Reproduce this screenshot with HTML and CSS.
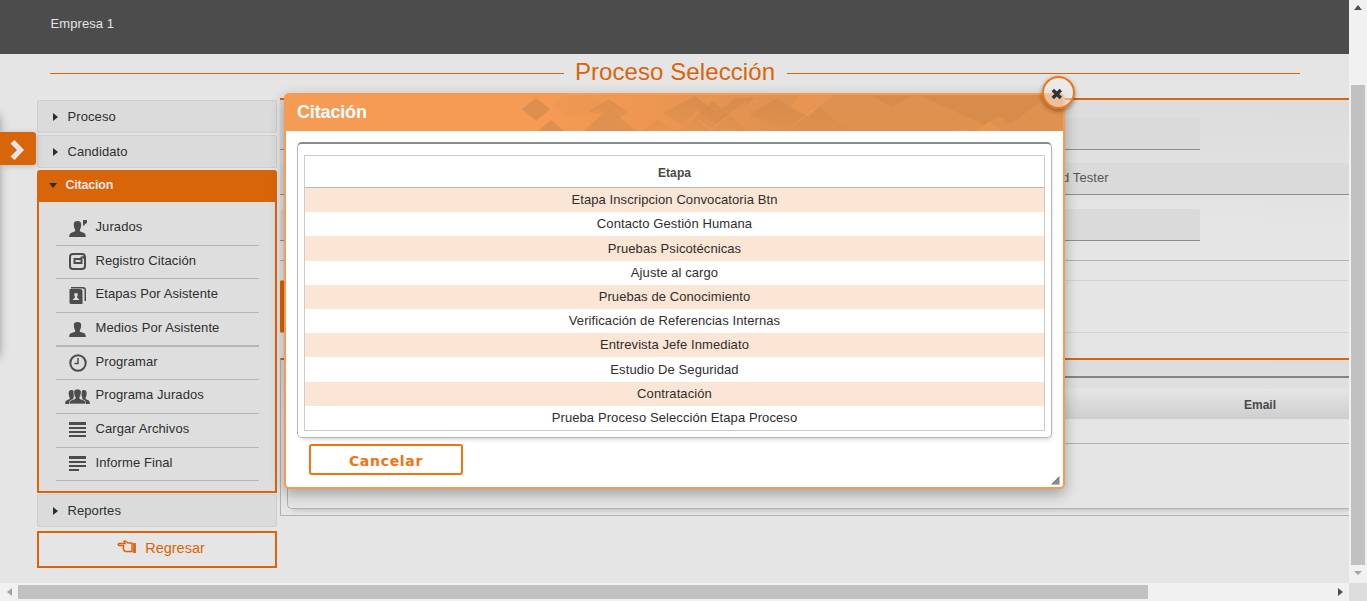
FILE: index.html
```html
<!DOCTYPE html>
<html lang="es">
<head>
<meta charset="utf-8">
<title>Proceso Selección</title>
<link rel="stylesheet" href="styles.css">
</head>
<body>
<svg class="defs" width="0" height="0">
  <symbol id="person" viewBox="0 0 18 16" preserveAspectRatio="none"><path d="M9 0C6 0 4.900 1.600 5.100 4c.1 2 .6 3.600 1.400 4.500v1.800L2 12C.7 12.700.2 14 .2 16h17.600c0-2-.5-3.300-1.800-4l-4.500-1.700V8.500c.8-.9 1.300-2.500 1.400-4.500C13.100 1.600 12 0 9 0z"/></symbol>
</svg>
<div class="window">
  <div class="page">
    <header class="topbar">Empresa 1</header>
    <div class="title-row"><i></i><h1>Proceso Selección</h1><i></i></div>
    <div class="columns">
      <nav class="sidebar">
        <div class="section first"><b class="arrow"></b><span>Proceso</span></div>
        <div class="section second"><b class="arrow"></b><span>Candidato</span></div>
        <div class="section open"><b class="arrow down"></b><span>Citacion</span></div>
        <ul class="menu">
          <li><svg width="26" height="20"><use href="#person" x="4" y="4" width="17" height="16"/><path d="M18 3h4v3l-2 1-1 2-1-1z"/></svg><span>Jurados</span></li>
          <li><svg width="26" height="20" class="line"><rect x="5" y="3" width="15" height="15" rx="3"/><path d="M9.500 8h7v4h-7z"/><path class="thin" d="M14 9l3-3h2v2"/></svg><span>Registro Citación</span></li>
          <li><svg width="26" height="20"><path d="M6 3h12q3 0 3 3v11h-1.500V6q0-1.500-2-1.500H6zM5 5h10q2.500 0 2.500 2v13H6q-1.500 0-1.500-1.500V5z"/><path class="light" d="M11 9q-2.300 0-1.700 2.200l.6 1.300v1L7.500 16h7l-2.400-2.500v-1l.6-1.300Q13.300 9 11 9z"/></svg><span>Etapas Por Asistente</span></li>
          <li class="thick"><svg width="26" height="20"><use href="#person" x="4" y="4" width="17" height="15"/></svg><span>Medios Por Asistente</span></li>
          <li><svg width="26" height="20" class="line"><circle cx="13" cy="11" r="7.700"/><path class="thin" d="M13 6v5.500H9.500"/></svg><span>Programar</span></li>
          <li><svg width="26" height="20"><use href="#person" x="0" y="5" width="13" height="14"/><use href="#person" x="13" y="5" width="12" height="14"/><use class="front" href="#person" x="4" y="4" width="17" height="15"/></svg><span>Programa Jurados</span></li>
          <li><svg width="26" height="20"><path d="M4 3h17v3H4zM4 8h17v2H4zM4 12h17v2H4zM4 16h17v2H4z"/></svg><span>Cargar Archivos</span></li>
          <li><svg width="26" height="20"><path d="M4 3h17v3H4zM4 8h17v2H4zM4 12h17v2H4zM4 16h10v2H4z"/></svg><span>Informe Final</span></li>
        </ul>
        <div class="section last"><b class="arrow"></b><span>Reportes</span></div>
        <div class="back"><svg width="20" height="14" viewBox="0 0 20 14"><path d="M6.500 5.500H2q-1.500-1.200 0-2h6L7 1.500q1-1.200 2 0L11 3h4v8.500H8.500Q6.500 11 7 9.500 5.500 8.500 6.500 7.500z"/><path class="cuff" d="M17.500 3v10"/></svg><span>Regresar</span></div>
      </nav>
      <main class="content">
        <section class="form">
          <div class="field"></div>
          <div class="field wide">d Tester</div>
          <div class="field"></div>
        </section>
        <div class="tabs"><div class="strip"></div></div>
        <section class="grid-panel">
          <div class="grid">
            <div class="grid-head"><span>Email</span></div>
            <div class="grid-row"></div>
          </div>
        </section>
      </main>
    </div>
    <div class="drawer-shadow"></div>
    <div class="drawer-tab"><svg width="18" height="22"><path d="M1.500 4.500l4-3.500 9.500 10-9.500 10-4-3.500L8 11z"/></svg></div>
    <div class="dialog">
      <div class="dialog-head">
        <svg class="pattern" width="544" height="36" viewBox="0 0 544 36">
          <defs>
            <linearGradient id="tone"><stop offset="0" stop-color="#df914f" stop-opacity="0"/><stop offset=".5" stop-color="#df914f"/></linearGradient>
            <linearGradient id="facet" x2="0" y2="1"><stop offset="0" stop-color="#cf8848"/><stop offset="1" stop-color="#cf8848" stop-opacity=".15"/></linearGradient>
          </defs>
          <path fill="url(#tone)" d="M45 0h515v36H10z"/>
          <g fill="#dc8f4f">
            <path d="M3 14L17 3l14 11-14 12zM19 36l13-11 13 11z"/>
            <path d="M34 9l9-8h28l12 8-14 12H48z" opacity=".2"/>
            <path d="M64 36l26-22 28 22z" opacity=".85"/>
          </g>
          <g fill="url(#facet)" opacity=".6">
            <path d="M70 16L90 4l18 13-8 6-10-8-8 5zM122 36l17-12 15 12zM144 18l32-17 22 17 18-15h20l-38 27-20-14-14 14z"/>
            <path d="M160 36l34-30 34 30zM230 20l28-17 26 18-18 14zM268 36l28-28 34 28z"/>
          </g>
          <g fill="#ce8747" opacity=".45">
            <path d="M350 0h45l-22 12zM400 0h130l-38 29-12-8-14 9z"/>
          </g>
          <path d="M180 25l12 10 36-29M275 30l38-30" fill="none" stroke="#f6ad72" stroke-width=".7" stroke-opacity=".6"/>
          <path d="M280 0h30l-20 22-18-10zM438 36l4-2 3 2zM457 36l13-9 13 9z" fill="#f39a55" fill-opacity=".5"/>
        </svg>
        <h2>Citación</h2>
      </div>
      <div class="dialog-body">
        <div class="frame">
          <table>
            <thead><tr><th>Etapa</th></tr></thead>
            <tbody>
              <tr><td>Etapa Inscripcion Convocatoria Btn</td></tr>
              <tr><td>Contacto Gestión Humana</td></tr>
              <tr><td>Pruebas Psicotécnicas</td></tr>
              <tr><td>Ajuste al cargo</td></tr>
              <tr><td>Pruebas de Conocimiento</td></tr>
              <tr><td>Verificación de Referencias Internas</td></tr>
              <tr><td>Entrevista Jefe Inmediato</td></tr>
              <tr><td>Estudio De Seguridad</td></tr>
              <tr><td>Contratación</td></tr>
              <tr><td>Prueba Proceso Selección Etapa Proceso</td></tr>
            </tbody>
          </table>
        </div>
        <button class="cancel">Cancelar</button>
      </div>
      <div class="close"><svg width="12" height="12"><path d="M1.800 2l8 8M9.800 2l-8 8"/></svg></div>
      <svg class="grip" width="10" height="10"><path d="M1 9.500l8.500-8.500v8.500z"/><path class="ridge" d="M3.500 10L10 3.500M6.500 10L10 6.500"/></svg>
    </div>
  </div>
  <div class="vbar"><b class="up"></b><div class="thumb"></div><b class="dn"></b></div>
  <div class="hbar"><b class="lf"></b><div class="thumb"></div><b class="rt"></b></div>
  <div class="corner"></div>
</div>
</body>
</html>
```
FILE: styles.css
```css
* { box-sizing: border-box; }
body { margin: 0; font: 13px "Liberation Sans", Arial, sans-serif; letter-spacing: .09px; color: #2e2e2e; overflow: hidden; }
.defs { position: absolute; }
.window { display: grid; grid-template: 583px 18px / 1349px 18px; width: 1367px; height: 601px; }
.page { position: relative; overflow: hidden; background: #e5e5e5; }
.topbar { height: 54px; padding: 16px 0 0 50.500px; background: #4c4c4c; color: #e5e5e5; line-height: 15px; }
.title-row { display: flex; align-items: center; height: 38px; padding: 0 49px 0 50px; }
.title-row i { flex: 1; height: 1px; background: #d9650b; }
.title-row h1 { width: 223px; margin: 0; text-align: center; font-weight: 400; font-size: 24px; line-height: 28px; letter-spacing: .08px; color: #d9650b; padding-bottom: 2px; }
.columns { display: flex; padding-left: 37px; }
.sidebar { width: 240px; padding-top: 8px; flex: none; }
.section { display: flex; align-items: center; height: 33px; padding-left: 15px; border: 1px solid #cfcfcf; border-radius: 2px; background: #dbdbdb; }
.arrow { width: 0; margin-right: 9.500px; border: solid transparent; border-width: 4px 0 4px 5px; border-left-color: #2e2e2e; }
.arrow.down { border-width: 5px 4.500px 0; border-color: #2e2e2e transparent; margin-right: 8.500px; margin-top: 1px; }
.second { margin-top: 2px; }
.open { margin-top: 2px; height: 32px; padding-left: 12px; padding-bottom: 3px; border: 0; border-radius: 3px 3px 0 0; background: #d9650b; color: #e8e4e0; font-weight: 700; font-size: 12.500px; letter-spacing: -.2px; }
.menu { list-style: none; height: 291px; margin: 0; padding: 10px 16px 0 17px; border: 2px solid #d9650b; border-top: 0; background: #dedede; }
.menu li { display: flex; height: 33.600px; border-bottom: 1px solid #b5b5b5; padding: 5px 0 0 9px; }
.menu li.thick { border-bottom-width: 2px; height: 34px; }
.menu svg { flex: none; width: 26px; fill: #4c4c4c; }
.menu span { margin: 2px 0 0 4.500px; line-height: 15px; white-space: nowrap; }
.line { fill: none !important; stroke: #4c4c4c; stroke-width: 2; }
.thin { stroke-width: 1.500; }
.light { fill: #dedede; }
.front { stroke: #dedede; stroke-width: .8; }
.last { margin-top: 1px; }
.back { display: flex; justify-content: center; height: 37px; margin-top: 4px; padding: 7px 0 0 8px; border: 2px solid #d9650b; color: #d9650b; font-size: 14.500px; letter-spacing: 0; line-height: 16px; gap: 8px; }
.back svg { fill: none; stroke: #d9650b; stroke-width: 1.500; }
.back .cuff { stroke-width: 2.800; }
.content { width: 1069px; margin-left: 3px; padding-top: 6px; flex: none; }
.form { height: 163px; padding-top: 18px; border-top: 2px solid #d9650b; border-bottom: 1px solid #b2b2b2; background: linear-gradient(#dcdcdc, #e5e5e5 80%); }
.field { width: 920px; height: 32px; margin-bottom: 13px; border-bottom: 1px solid #8f8f8f; border-radius: 3px 3px 0 0; background: #dadada; }
.wide { width: 100%; padding: 7px 0 0 782px; margin-bottom: 14px; color: #555; line-height: 15px; }
.tabs { height: 97px; padding-top: 19px; }
.strip { height: 53px; border: solid #d2d2d2; border-width: 1px 0; border-left: 5px solid #d9650b; border-radius: 2px; }
.grid-panel { height: 158px; padding: 16px 0 0 6px; border: 1px solid #b2b2b2; border-width: 2px 0 1px 1px; border-top-color: #d9650b; background: linear-gradient(#dcdcdc, #e5e5e5 45%); }
.grid { height: 133px; padding-top: 11px; border: 1px solid #b2b2b2; border-width: 2px 0 1px 1px; border-top-color: #858585; border-radius: 4px 0 0 5px; box-shadow: 3px 3px 5px -2px #bbb; }
.grid-head { height: 30px; padding: 9px 73px 0 0; text-align: right; line-height: 15px; font-weight: 700; font-size: 12px; letter-spacing: 0; color: #484848; background: linear-gradient(#e5e5e5, #cecece); }
.grid-row { height: 25px; border-bottom: 1px solid #b2b2b2; background: #e5e5e5; }
.drawer-shadow { position: absolute; left: -10px; top: 116px; width: 10px; height: 240px; box-shadow: 0 0 9px 0 #999; }
.drawer-tab { position: absolute; left: 0; top: 132px; width: 36px; height: 33px; padding: 7px 0 0 9px; border-radius: 0 3px 3px 0; background: #d9650b; box-shadow: 0 1px 6px #bbb; }
.drawer-tab svg { display: block; fill: #e5e5e5; }
.dialog { position: absolute; left: 284px; top: 93px; width: 781px; height: 396px; border: 2px solid #f69b54; border-radius: 5px; background: #fff; box-shadow: 0 5px 14px rgba(0,0,0,.3); }
.dialog-head { height: 36px; overflow: hidden; background: #f69b54; padding-left: 11px; }
.dialog-head h2 { margin: 0; padding-top: 7px; color: #fff; font-size: 18px; line-height: 20px; letter-spacing: -.15px; }
.pattern { float: right; }
.dialog-body { padding: 11px 11px 0; }
.frame { height: 296px; padding: 10px 6px 0; border: 1px solid #b5b5b5; border-top: 2px solid #8b8b8b; border-radius: 5px; box-shadow: 2px 4px 5px -3px #ccc; }
table { width: 741px; height: 277px; margin-top: 1px; border-collapse: separate; border-spacing: 0; border: 1px solid #ccc; text-align: center; }
table { height: 276px; }
th, td { padding: 0; line-height: 15px; }
th { height: 32px; border-bottom: 1px solid #b7b7b7; font-size: 12px; letter-spacing: .1px; color: #484848; padding-top: 4px; }
td { height: 24.200px; padding-bottom: .6px; }
tbody tr:nth-child(odd) td { background: #fbe5d5; }
.cancel { display: block; width: 154px; height: 31px; margin: 6px 0 0 12px; padding: 2px 0 0; border: 2px solid #f3730f; border-radius: 3px; background: #fff; color: #f3730f; font: bold 14px "DejaVu Sans", sans-serif; letter-spacing: .7px; }
.close { position: absolute; right: -12px; top: -19px; width: 33px; height: 33px; padding: 10px 0 0 7px; border: 2px solid #f3730f; border-radius: 50%; background: rgba(240,240,240,.5); box-shadow: 0 2px 5px rgba(0,0,0,.4); }
.close svg { display: block; stroke: #333; stroke-width: 3.500; }
.grip { position: absolute; right: 3px; bottom: 2px; fill: #777; }
.ridge { fill: none; stroke: #ccc; stroke-width: .7; }
.vbar { display: flex; flex-direction: column; background: #f1f1f1; }
.vbar .thumb { width: 14px; height: 480px; margin: 75px 0 0 2px; background: #c1c1c1; }
.hbar { display: flex; background: #f1f1f1; align-items: center; }
.hbar .thumb { width: 1130px; height: 14px; background: #c1c1c1; margin-left: 6px; }
.vbar b, .hbar b { width: 0; height: 0; border: 4px solid transparent; flex: none; }
.vbar .up { margin: 5px 0 0 5px; border-width: 0 4px 5px; border-bottom-color: #505050; }
.vbar .dn { margin: 6px 0 0 5px; border-width: 4px 4px 0; border-top-color: #a3a3a3; }
.hbar .lf { margin-left: 7px; border-width: 4px 5px 4px 0; border-right-color: #a3a3a3; }
.hbar .rt { margin-left: 190px; border-width: 4px 0 4px 5px; border-left-color: #505050; }
.corner { background: #dcdcdc; }
```
